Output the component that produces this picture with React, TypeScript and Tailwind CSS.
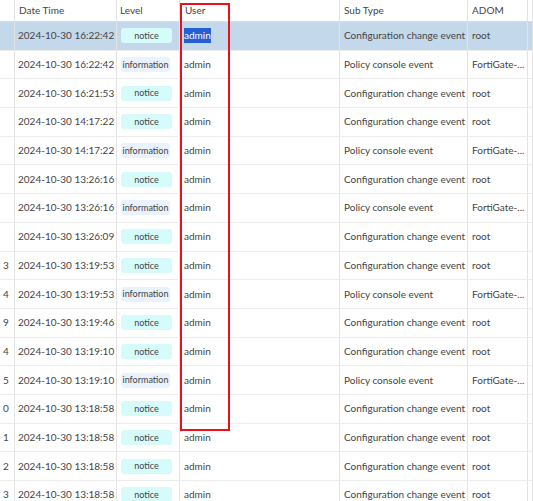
import React from "react";

type Row = { n: string; t: string; lvl: "notice" | "information"; sub: string; adom: string };

const C = "Configuration change event";
const P = "Policy console event";
const F = "FortiGate-...";

const rows: Row[] = [
  { n: "", t: "2024-10-30 16:22:42", lvl: "notice", sub: C, adom: "root" },
  { n: "", t: "2024-10-30 16:22:42", lvl: "information", sub: P, adom: F },
  { n: "", t: "2024-10-30 16:21:53", lvl: "notice", sub: C, adom: "root" },
  { n: "", t: "2024-10-30 14:17:22", lvl: "notice", sub: C, adom: "root" },
  { n: "", t: "2024-10-30 14:17:22", lvl: "information", sub: P, adom: F },
  { n: "", t: "2024-10-30 13:26:16", lvl: "notice", sub: C, adom: "root" },
  { n: "", t: "2024-10-30 13:26:16", lvl: "information", sub: P, adom: F },
  { n: "", t: "2024-10-30 13:26:09", lvl: "notice", sub: C, adom: "root" },
  { n: "3", t: "2024-10-30 13:19:53", lvl: "notice", sub: C, adom: "root" },
  { n: "4", t: "2024-10-30 13:19:53", lvl: "information", sub: P, adom: F },
  { n: "9", t: "2024-10-30 13:19:46", lvl: "notice", sub: C, adom: "root" },
  { n: "4", t: "2024-10-30 13:19:10", lvl: "notice", sub: C, adom: "root" },
  { n: "5", t: "2024-10-30 13:19:10", lvl: "information", sub: P, adom: F },
  { n: "0", t: "2024-10-30 13:18:58", lvl: "notice", sub: C, adom: "root" },
  { n: "1", t: "2024-10-30 13:18:58", lvl: "notice", sub: C, adom: "root" },
  { n: "2", t: "2024-10-30 13:18:58", lvl: "notice", sub: C, adom: "root" },
  { n: "3", t: "2024-10-30 13:18:58", lvl: "notice", sub: C, adom: "root" },
];

const grid = "grid grid-cols-[15px_102px_63px_160px_128px_60px_1fr]";
const cell = "border-r border-[#e3e3e3] flex items-center overflow-hidden whitespace-nowrap";

export default function App() {
  return (
    <div
      className="relative w-[533px] h-[501px] overflow-hidden bg-white text-[10px] text-[#444]"
      style={{ fontFamily: "Lato, 'Open Sans', sans-serif" }}
    >
      <div className={`${grid} h-[22px] border-b border-[#dcdcdc]`}>
        <div className={cell}></div>
        <div className={`${cell} pl-[4px]`}>Date Time</div>
        <div className={`${cell} pl-[3px]`}>Level</div>
        <div className={`${cell} pl-[5px]`}>User</div>
        <div className={`${cell} pl-[4px]`}>Sub Type</div>
        <div className={`${cell} pl-[4px]`}>ADOM</div>
        <div className="border-r border-[#e3e3e3]"></div>
      </div>
      {rows.map((r, i) => {
        const sel = i === 0;
        return (
          <div
            key={i}
            className={`${grid} h-[28.7px] border-b border-[#ececec] ${sel ? "bg-[#c4d8ec]" : "bg-white"}`}
          >
            <div className={`${cell} pl-[3px]`}>{r.n}</div>
            <div className={`${cell} pl-[3px]`}>{r.t}</div>
            <div className={`${cell} pl-[4px]`}>
              {r.lvl === "notice" ? (
                <span className="w-[51px] h-[15px] rounded-[3px] bg-[#d6fbfb] text-[9px] flex items-center justify-center">
                  notice
                </span>
              ) : (
                <span className="w-[49px] h-[15px] rounded-[3px] bg-[#eaf2fd] text-[9px] flex items-center justify-center">
                  information
                </span>
              )}
            </div>
            <div className={`${cell} pl-[4px]`}>
              {sel ? <span className="bg-[#2260d4] text-white">admin</span> : "admin"}
            </div>
            <div className={`${cell} pl-[4px]`}>{r.sub}</div>
            <div className={`${cell} pl-[4px]`}>{r.adom}</div>
            <div className="border-r border-[#e3e3e3]"></div>
          </div>
        );
      })}
      <div className="absolute left-[180px] top-[3px] w-[50px] h-[428px] border-2 border-[#e8101a]" />
    </div>
  );
}
